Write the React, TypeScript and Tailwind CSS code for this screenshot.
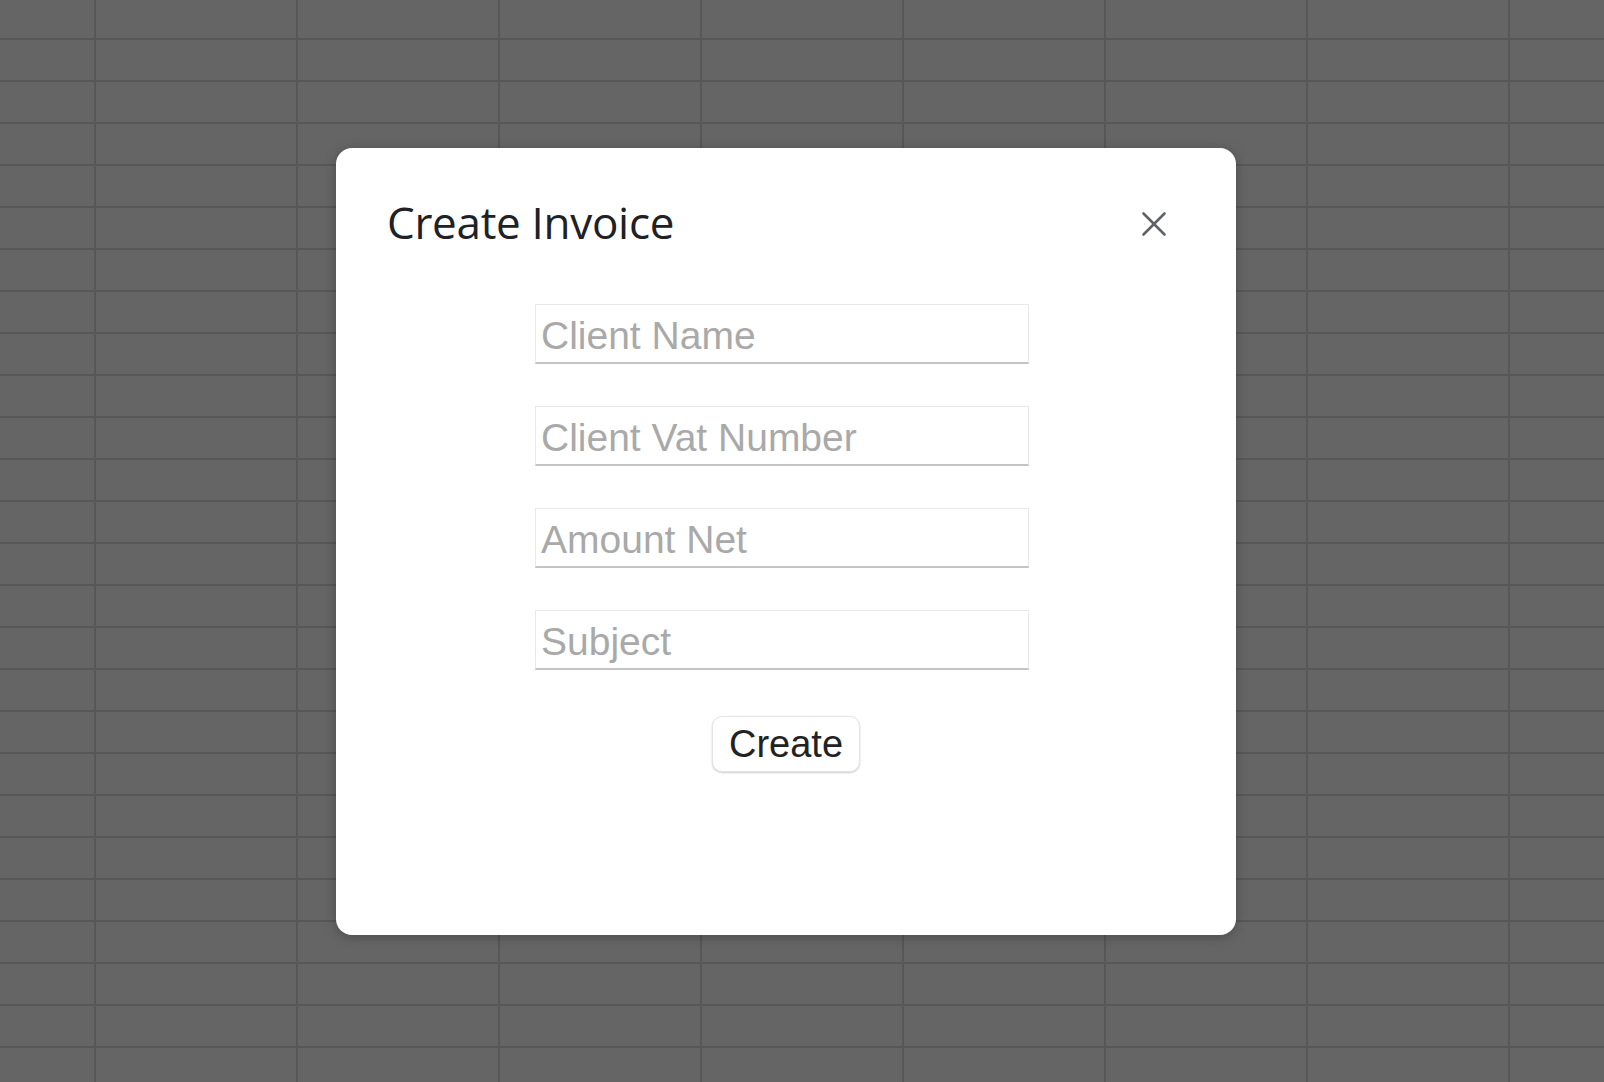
import { X } from 'lucide-react'

const rows = Array.from({ length: 27 }, (_, i) => i)
const cols = Array.from({ length: 9 }, (_, i) => i)

const fields = ['Client Name', 'Client Vat Number', 'Amount Net', 'Subject']

const Sheet = () => {
  return (
    <div className="flex flex-col bg-[#656565]">
      {rows.map((r) => (
        <div
          key={r}
          className={`flex shrink-0 border-b-2 border-[#575757] ${r === 0 ? 'h-[40px]' : 'h-[42px]'}`}
        >
          {cols.map((c) => (
            <div
              key={c}
              className={`shrink-0 border-r-2 border-[#575757] ${c === 0 ? 'w-[96px]' : 'w-[202px]'}`}
            />
          ))}
        </div>
      ))}
    </div>
  )
}

export default function App() {
  return (
    <div className="relative h-[1082px] w-[1604px] overflow-hidden bg-[#656565]">
      <Sheet />
      <div className="absolute inset-0 flex items-center justify-center pr-[32px]">
        <div className="flex h-[787px] w-[900px] flex-col rounded-[16px] bg-white px-[51px] pt-[46px] shadow-[0_2px_12px_rgba(0,0,0,0.25)]">
          <div className="flex items-start justify-between">
            <h2 className="font-['Open_Sans',sans-serif] text-[44px] leading-[56px] tracking-[-0.3px] text-[#202124]">
              Create Invoice
            </h2>
            <button className="mr-[10px] mt-[9px] text-[#5f6368]">
              <X size={42} strokeWidth={1.5} />
            </button>
          </div>
          <div className="mt-[54px] flex flex-col items-center">
            <div className="flex w-[502px] flex-col gap-[42px] pr-[8px]">
              {fields.map((f) => (
                <input
                  key={f}
                  placeholder={f}
                  className="h-[60px] w-[494px] border border-[#e8e8e8] border-b-2 border-b-[#c4c4c4] bg-white px-[5px] pt-[6px] font-['Liberation_Sans',Arial,sans-serif] text-[39px] text-[#222] outline-none placeholder:text-[#a9a9a9]"
                />
              ))}
            </div>
            <button className="mt-[46px] h-[56px] w-[148px] rounded-[10px] border border-[#e4e4e4] bg-white font-['Liberation_Sans',Arial,sans-serif] text-[38px] leading-none text-[#222] shadow-[0_1px_2px_rgba(0,0,0,0.2)]">
              Create
            </button>
          </div>
        </div>
      </div>
    </div>
  )
}
